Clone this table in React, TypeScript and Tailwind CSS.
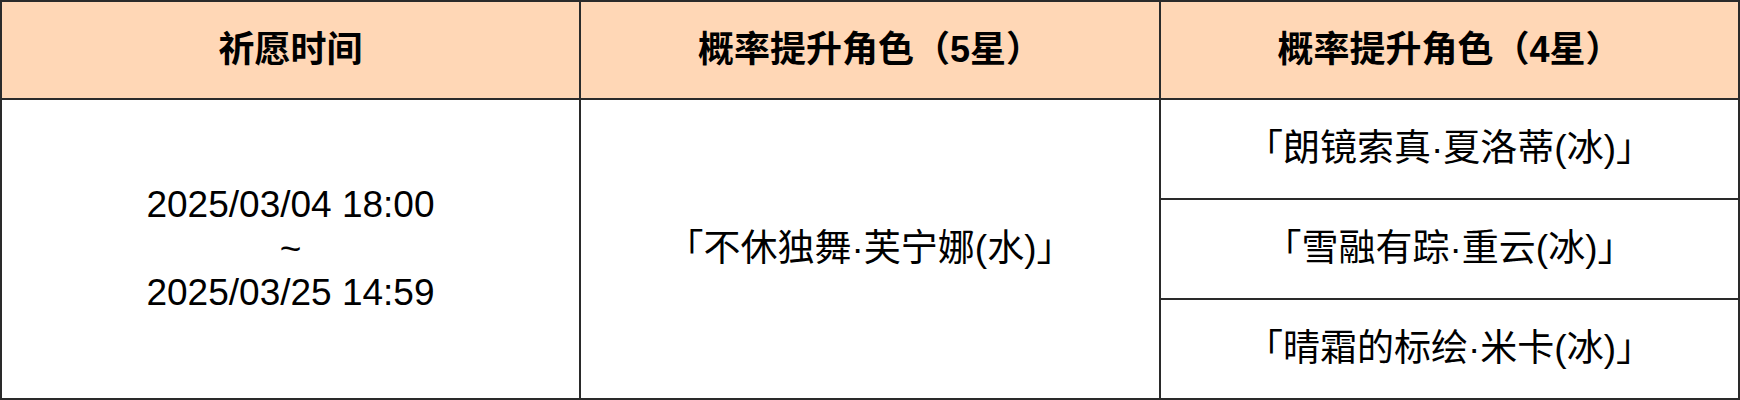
export default function App() {
  const cell =
    "border-r-2 border-b-2 border-[#2a2a2a] text-center align-middle p-0";
  const head =
    "font-['Liberation_Sans','Noto_Sans_CJK_SC',sans-serif] text-[36px] font-bold text-black";
  const body =
    "font-['Liberation_Sans','Noto_Sans_CJK_SC',sans-serif] text-[37px] font-normal text-black";
  return (
    <div className="w-[1740px] h-[400px] bg-white">
      <table className="w-[1740px] border-separate border-spacing-0 table-fixed border-t-2 border-l-2 border-[#2a2a2a]">
        <thead>
          <tr className="h-[98px] bg-[#ffd7b6]">
            <th className={cell + " w-[579px] " + head}>祈愿时间</th>
            <th className={cell + " w-[580px] " + head}>概率提升角色（5星）</th>
            <th className={cell + " " + head}>概率提升角色（4星）</th>
          </tr>
        </thead>
        <tbody>
          <tr className="h-[100px]">
            <td
              rowSpan={3}
              className={cell + " font-['Liberation_Sans',sans-serif] text-[37px] leading-[44px] text-black"}
            >
              <div>2025/03/04 18:00</div>
              <div>~</div>
              <div>2025/03/25 14:59</div>
            </td>
            <td rowSpan={3} className={cell + " " + body}>
              「不休独舞·芙宁娜(水)」
            </td>
            <td className={cell + " " + body}>「朗镜索真·夏洛蒂(冰)」</td>
          </tr>
          <tr className="h-[100px]">
            <td className={cell + " " + body}>「雪融有踪·重云(冰)」</td>
          </tr>
          <tr className="h-[100px]">
            <td className={cell + " " + body}>「晴霜的标绘·米卡(冰)」</td>
          </tr>
        </tbody>
      </table>
    </div>
  );
}
